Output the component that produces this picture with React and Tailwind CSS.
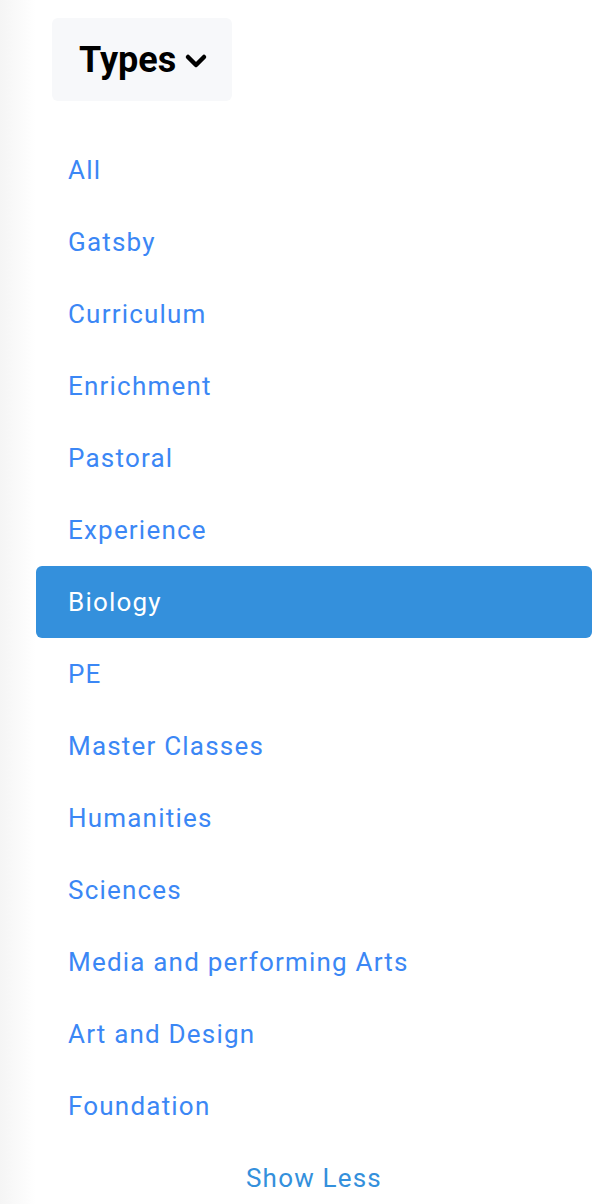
import React from 'react';

const TYPES = [
  'All',
  'Gatsby',
  'Curriculum',
  'Enrichment',
  'Pastoral',
  'Experience',
  'Biology',
  'PE',
  'Master Classes',
  'Humanities',
  'Sciences',
  'Media and performing Arts',
  'Art and Design',
  'Foundation',
];

export default function App() {
  const active = 'Biology';

  return (
    <div className="flex min-h-[1204px] bg-white font-['Roboto',sans-serif]">
      {/* faint edge shadow */}
      <div className="w-[36px] shrink-0 bg-linear-to-r from-[#f5f5f5] to-white" />

      <div className="w-[556px] flex flex-col">
        {/* Dropdown header */}
        <div className="pl-4 pt-[18px] pb-[33px]">
          <button className="flex items-center gap-[9px] h-[83px] w-[180px] pl-[27px] bg-[#f7f8fa] rounded-md text-[36px] font-bold text-black">
            Types
            <svg width="24" height="16" viewBox="0 0 24 16" className="mt-[2px] -ml-[1px]">
              <polyline points="4,4 12,12 20,4" fill="none" stroke="#000" strokeWidth="4.5" strokeLinecap="round" strokeLinejoin="round" />
            </svg>
          </button>
        </div>

        {/* Types list */}
        <ul className="flex flex-col">
          {TYPES.map(t => (
            <li
              key={t}
              className={
                t === active
                  ? 'h-[72px] flex items-center pl-8 rounded-md bg-[#3490dc] text-white text-[26px] tracking-[1.2px]'
                  : 'h-[72px] flex items-center pl-8 text-[#3b87f5] text-[26px] tracking-[1.2px]'
              }
            >
              {t}
            </li>
          ))}
        </ul>

        <button className="h-[72px] flex items-center justify-center text-[#3490dc] text-[26px] tracking-[1.2px]">
          Show Less
        </button>
      </div>
    </div>
  );
}
